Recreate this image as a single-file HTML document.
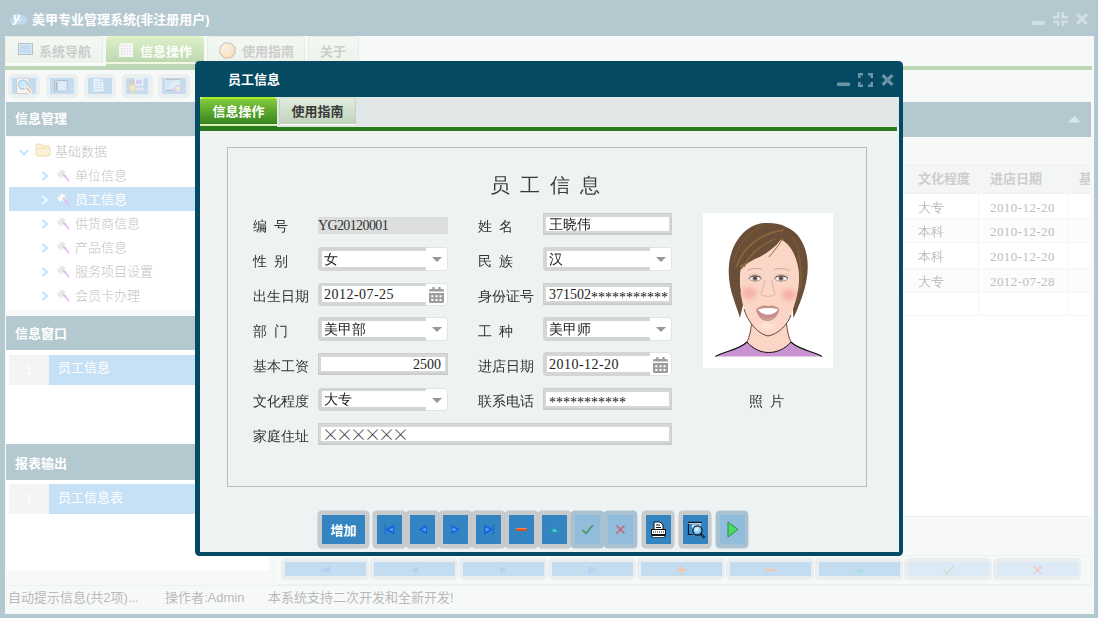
<!DOCTYPE html>
<html lang="zh-CN">
<head>
<meta charset="utf-8">
<title>美甲专业管理系统</title>
<style>
*{box-sizing:border-box;margin:0;padding:0}
html,body{width:1099px;height:618px;overflow:hidden;background:#f3f7f9}
body{position:relative;font-family:"Liberation Sans","Noto Sans CJK SC",sans-serif;font-size:13px;color:#333}
.a{position:absolute}
.ya{font-family:"Liberation Sans","Noto Sans CJK SC",sans-serif}
.ss{font-family:"Liberation Serif","WenQuanYi Zen Hei","Noto Sans CJK SC",sans-serif}
#win{left:0;top:0;width:1098px;height:618px;background:#b4c8d0}
#cont{left:5px;top:36px;width:1089px;height:578px;background:#f7f9f9}
.wt{color:#fff;font-weight:bold;font-size:13px;white-space:nowrap}
/* outer tabs */
.otab{top:36px;height:28px;border:1px solid #e6ede6;border-bottom:1px solid #fff;border-radius:4px 4px 0 0;background:linear-gradient(#f4f8f4,#ebf3ea);color:#cdcdcd;font-weight:bold;font-size:13px;line-height:29px;white-space:nowrap}
.otab.on{background:linear-gradient(#e9f8c0 0,#dcefc8 1.5px,#bcd9b0 26px,#f2f8e0 26.5px,#f2f8e0 27.5px,#bcd8b4 28px);border:none;border-top:0;color:#fff;height:30px;line-height:31px}
/* toolbar */
.tb{top:74px;width:32px;height:24px;border-radius:5px;background:#eceff0}
.tb i{position:absolute;left:4px;top:4px;width:24px;height:16px;background:#c4dcf0}
/* left */
.hd{height:34px;background:#b4c8d0;color:#fff;font-weight:bold;font-size:13px;line-height:34px;padding-left:9px;white-space:nowrap}
.tr{left:9px;width:264px;height:24px;line-height:24px;font-size:13px;font-weight:300;color:#c2c2c2;white-space:nowrap}
.tr span{position:absolute;top:0}
.chev{stroke:#a2e2f6;stroke-width:1.5;fill:none}
/* dialog */
#dlg{left:195px;top:61px;width:708px;height:495px;background:#044a63;border-radius:4.5px}
#dbody{left:5px;top:36px;width:699px;height:455px;background:#eef2f3}
.as{position:relative;top:3px}
.lb{font-size:14px;line-height:16px;color:#333;white-space:pre;word-spacing:3.5px}
.fld{height:21px;background:#fff;border:3px solid #d6d7d7;border-top-width:4px;box-shadow:0 1px 0 #c9caca;outline:1px solid #cdcece;outline-offset:-1px;font-size:14px;line-height:16px;color:#222;white-space:nowrap;overflow-x:clip;overflow-y:visible;padding-left:3px}
.cmb{height:24px;width:130px;border-radius:4px;background:#fff;box-shadow:inset 0 0 0 1px #e0e4e4;overflow:hidden;font-size:14px;color:#222;white-space:nowrap}
.cmb .in{position:absolute;left:0;top:0;width:108px;height:100%;border:4px solid #d4d6d6;border-right:none;background:#fff;padding-left:2px;line-height:18px;border-radius:3px 0 0 3px}
.cmb.d{height:23px}
.cmb.d .in{border-top-width:3px;line-height:18px}
.arr{position:absolute;right:6.5px;top:10px;width:0;height:0;border:5px solid transparent;border-top:5.5px solid #979797;border-bottom:none}
.bt{top:450px;width:32px;height:36.5px;border-radius:4px;background:#c7cbcb;box-shadow:0 0 0 .5px #b4c6d2}
.bt i{position:absolute;left:4px;top:4px;width:25px;height:29px;background:#3384c0}
.bt.dis{background:#a9c2d2}
.bt.dis i{background:#92bcdc}
.bt svg{position:absolute;left:4px;top:4px}
/* grid */
.gh{top:164px;height:30px;line-height:30px;font-weight:bold;font-size:13px;color:#cdcdcd;white-space:nowrap}
.gc{font-family:"Liberation Serif","WenQuanYi Zen Hei","Noto Sans CJK SC",sans-serif;font-size:13px;color:#bdbdbd;white-space:nowrap;line-height:24px;height:24px}
.nb{top:558px;width:88px;height:22px;border-radius:5px;background:#ebeef0}
.nb i{position:absolute;left:4px;top:4px;width:81px;height:14px;background:#c4dcf0}
.nb.dis i{background:#dceaf5}
.nb svg{position:absolute;left:4px;top:5px}
.st{top:588px;height:20px;line-height:20px;font-size:13px;color:#b9b9b9;white-space:nowrap}
</style>
</head>
<body>
<div id="win" class="a">
<!-- title -->
<svg class="a" style="left:9px;top:11px" width="18" height="15" viewBox="0 0 18 15"><path d="M4.500 13.500a3.700 3.700 0 0 1-.5-7.300A4.600 4.600 0 0 1 12.300 4.300a3.600 3.600 0 0 1 2.200 9.200z" fill="#bfd9ec"/><text x="3.800" y="11.300" font-size="13" font-weight="bold" font-style="italic" fill="#fff" font-family="Liberation Sans,sans-serif">y</text><path d="M10.500 8.500h3M10.500 8.500v2.500" stroke="#e4f0f8" stroke-width="1" fill="none"/></svg>
<div class="a wt" style="left:32px;top:10px;line-height:20px">美甲专业管理系统(非注册用户)</div>
<svg class="a" style="left:1030px;top:10px" width="60" height="18" viewBox="0 0 60 18" fill="#d3dde5"><rect x="2" y="11" width="13" height="4" rx="1"/><path d="M23 6h4V2h2.500v6.500H23zM31.500 2H34v4h4v2.500h-6.500zM23 10.500h6.500V16H27v-3h-4zM31.500 10.500H38V13h-4v3h-2.500z"/><path d="M46 5.200L48.200 3 52 6.800 55.800 3 58 5.200 54.200 9 58 12.800 55.800 15 52 11.200 48.200 15 46 12.800 49.800 9z"/></svg>
<div id="cont" class="a"></div>

<!-- outer tabs -->
<div class="a otab" style="left:5px;width:98px"><svg class="a" style="left:12px;top:6px" width="15" height="12" viewBox="0 0 15 12"><rect x=".5" y=".5" width="14" height="11" fill="#d6e7f5" stroke="#bdbdc8"/><rect x="2" y="2" width="11" height="8" fill="#c6dcf0"/></svg><span class="a" style="left:33px">系统导航</span></div>
<div class="a otab on" style="left:106px;width:98px"><svg class="a" style="left:13px;top:7px" width="14" height="14" viewBox="0 0 14 14"><path d="M2.500 0H14V14H0V2.500z" fill="#fbf9fb"/><path d="M2.800 1v13M5.600 0v14M8.400 0v14M11.200 0v14M1 2.800h13M0 5.600h14M0 8.400h14M0 11.200h14" stroke="#e2dde2" stroke-width=".5"/></svg><span class="a" style="left:34px">信息操作</span></div>
<div class="a otab" style="left:207px;width:98px"><svg class="a" style="left:11px;top:5px" width="17" height="17" viewBox="0 0 18 18"><defs><linearGradient id="og" x1="0" y1="0" x2="1" y2="1"><stop offset="0" stop-color="#fef6de"/><stop offset="1" stop-color="#fbd9b0"/></linearGradient></defs><path d="M5.800 1h6.400L17 5.800v6.400L12.200 17H5.800L1 12.200V5.800z" fill="url(#og)" stroke="#cbbcc4" stroke-width="1.100"/><text x="5.800" y="13.600" font-size="12" font-weight="bold" fill="#e9f0f4" font-family="Liberation Sans,sans-serif">?</text></svg><span class="a" style="left:34px">使用指南</span></div>
<div class="a otab" style="left:308px;width:51px"><span class="a" style="left:11px">关于</span></div>
<div class="a" style="left:5px;top:66px;width:1087px;height:4px;background:#bdd6b8"></div>
<!-- toolbar -->
<div class="a tb" style="left:8px"><i></i><svg class="a" style="left:7px;top:3px" width="18" height="18" viewBox="0 0 18 18"><rect x="1.500" y="1" width="12.500" height="15.500" rx="1" fill="#f3f4f5" stroke="#cfcfcf"/><circle cx="8" cy="7.500" r="4.500" fill="#cfeaf8" stroke="#a9cfe6" stroke-width="1.300"/><path d="M11.500 11l3.500 3.800" stroke="#fff" stroke-width="4" stroke-linecap="round"/><path d="M11.500 11l3.500 3.800" stroke="#f4c3a6" stroke-width="2.400" stroke-linecap="round"/></svg></div>
<div class="a tb" style="left:46px"><i></i><svg class="a" style="left:8px;top:5px" width="16" height="14" viewBox="0 0 16 14"><rect x=".5" y="1.500" width="12.500" height="10.500" fill="#d6e7f5" stroke="#b4bcc4"/><path d="M2.500 3v8" stroke="#aab4bc" stroke-width="1.500"/><path d="M5 4h8M5 6.500h8M5 9h8M5 11h8" stroke="#e9f2f9" stroke-width="1.200"/></svg></div>
<div class="a tb" style="left:84px"><i></i><svg class="a" style="left:8px;top:3px" width="13" height="16" viewBox="0 0 14 17"><path d="M1 1h8l4 4v11H1z" fill="#eaf4fd" stroke="#c3d5e4"/><path d="M9 1v4h4" fill="#f6f9fc" stroke="#c3c9d0"/><path d="M3 5h4M3 7.500h8M3 10h8M3 12.500h8" stroke="#c4dcf2" stroke-width="1.100"/></svg></div>
<div class="a tb" style="left:122px;width:31px"><i style="width:22px"></i><svg class="a" style="left:6px;top:3px" width="20" height="18" viewBox="0 0 20 18"><rect x="7.400" y="2" width="7.200" height="6" fill="#d6d0f8" stroke="#f4f6f8" stroke-width="1.200"/><circle cx="4.400" cy="5.300" r="2.300" fill="#d4d4d4" stroke="#bdbdbd" stroke-width=".5"/><path d="M1.800 7.800h5.400v5h-1.200v4h-1.200v-3.500h-.6v3.500H3v-4H1.800z" fill="#f7e8c4" stroke="#e6d2a4" stroke-width=".5"/><rect x="8" y="10.500" width="7.500" height="3" fill="#f4f6f8" stroke="#d8dce0" stroke-width=".6"/><path d="M9.500 12h4.500M8 15.800h6" stroke="#d4d8dc" stroke-width="1"/></svg></div>
<div class="a tb" style="left:158px"><i></i><svg class="a" style="left:6px;top:3px" width="20" height="18" viewBox="0 0 20 18"><defs><linearGradient id="mg" x1="0" y1="0" x2="1" y2="1"><stop offset="0" stop-color="#c9e0f3"/><stop offset="1" stop-color="#eef6fc"/></linearGradient></defs><rect x="1.800" y="2.300" width="14" height="11" fill="url(#mg)" stroke="#e4ecf2" stroke-width=".8"/><path d="M1.800 2.300h14M1.800 13.300h14" stroke="#b4b4b8" stroke-width="1.100"/><circle cx="13.900" cy="12" r="3.500" fill="#cfe4f6" stroke="#eeb8e6" stroke-width=".8"/><path d="M12 10.500q2-1.500 3.500 0 0 2-1.500 3-1.500-.5-2-3z" fill="#f6ecb8"/></svg></div>
<!-- left panel -->
<div class="a" style="left:6px;top:137px;width:265px;height:173px;background:#fff"></div>
<div class="a hd" style="left:6px;top:102px;width:267px">信息管理</div>
<div class="a" style="left:9px;top:187px;width:264px;height:24px;background:#c6e1f6"></div>
<div class="a tr" style="top:140px"><svg class="a" style="left:10px;top:7px" width="10" height="10" viewBox="0 0 10 10"><path class="chev" d="M1 3l4 4.500L9 3"/></svg><svg class="a" style="left:26px;top:3px" width="16" height="14" viewBox="0 0 16 14"><path d="M1 3.500Q1 1 3 1h3l1.500 2H13q2 0 2 2v6q0 2-2 2H3q-2 0-2-2z" fill="#fcf1d4" stroke="#eddcae"/><path d="M1.500 5.500h13" stroke="#f4e1b4"/></svg><span style="left:46px">基础数据</span></div>
<div class="a tr" style="top:164px"><svg class="a" style="left:32px;top:7px" width="8" height="10" viewBox="0 0 8 10"><path class="chev" d="M1.500 1l4.500 4-4.500 4"/></svg><svg class="a tic" style="left:46px;top:4px" width="16" height="15" viewBox="0 0 16 15"><path d="M2 6l5-4.500 4 2-2 1.500 2.500 2.500L9 10 7 8 4.500 10z" fill="#e9e9e9"/><path d="M8 6l6 7" stroke="#e3b9f0" stroke-width="1.500"/></svg><span style="left:66px">单位信息</span></div>
<div class="a tr" style="top:188px;color:#fff;font-weight:400"><svg class="a" style="left:32px;top:7px" width="8" height="10" viewBox="0 0 8 10"><path class="chev" style="stroke:#fff" d="M1.500 1l4.500 4-4.500 4"/></svg><svg class="a" style="left:46px;top:4px" width="16" height="15" viewBox="0 0 16 15"><path d="M2 6l5-4.500 4 2-2 1.500 2.500 2.500L9 10 7 8 4.500 10z" fill="#f7f7f7"/><path d="M8 6l6 7" stroke="#e3b9f0" stroke-width="1.500"/></svg><span style="left:66px">员工信息</span></div>
<div class="a tr" style="top:212px"><svg class="a" style="left:32px;top:7px" width="8" height="10" viewBox="0 0 8 10"><path class="chev" d="M1.500 1l4.500 4-4.500 4"/></svg><svg class="a" style="left:46px;top:4px" width="16" height="15" viewBox="0 0 16 15"><path d="M2 6l5-4.500 4 2-2 1.500 2.500 2.500L9 10 7 8 4.500 10z" fill="#e9e9e9"/><path d="M8 6l6 7" stroke="#e3b9f0" stroke-width="1.500"/></svg><span style="left:66px">供货商信息</span></div>
<div class="a tr" style="top:236px"><svg class="a" style="left:32px;top:7px" width="8" height="10" viewBox="0 0 8 10"><path class="chev" d="M1.500 1l4.500 4-4.500 4"/></svg><svg class="a" style="left:46px;top:4px" width="16" height="15" viewBox="0 0 16 15"><path d="M2 6l5-4.500 4 2-2 1.500 2.500 2.500L9 10 7 8 4.500 10z" fill="#e9e9e9"/><path d="M8 6l6 7" stroke="#e3b9f0" stroke-width="1.500"/></svg><span style="left:66px">产品信息</span></div>
<div class="a tr" style="top:260px"><svg class="a" style="left:32px;top:7px" width="8" height="10" viewBox="0 0 8 10"><path class="chev" d="M1.500 1l4.500 4-4.500 4"/></svg><svg class="a" style="left:46px;top:4px" width="16" height="15" viewBox="0 0 16 15"><path d="M2 6l5-4.500 4 2-2 1.500 2.500 2.500L9 10 7 8 4.500 10z" fill="#e9e9e9"/><path d="M8 6l6 7" stroke="#e3b9f0" stroke-width="1.500"/></svg><span style="left:66px">服务项目设置</span></div>
<div class="a tr" style="top:284px"><svg class="a" style="left:32px;top:7px" width="8" height="10" viewBox="0 0 8 10"><path class="chev" d="M1.500 1l4.500 4-4.500 4"/></svg><svg class="a" style="left:46px;top:4px" width="16" height="15" viewBox="0 0 16 15"><path d="M2 6l5-4.500 4 2-2 1.500 2.500 2.500L9 10 7 8 4.500 10z" fill="#e9e9e9"/><path d="M8 6l6 7" stroke="#e3b9f0" stroke-width="1.500"/></svg><span style="left:66px">会员卡办理</span></div>
<div class="a hd" style="left:6px;top:316px;width:267px;line-height:36px">信息窗口</div>
<div class="a" style="left:6px;top:350px;width:265px;height:94px;background:#fff"></div>
<div class="a" style="left:9px;top:355px;width:40px;height:30px;background:#f3f4f4;color:#fff;font-size:13px;line-height:30px;text-align:center">1</div>
<div class="a" style="left:49px;top:355px;width:224px;height:30px;background:#c6e1f6;color:#fff;font-size:13px;line-height:26px;padding-left:9px">员工信息</div>
<div class="a hd" style="left:6px;top:444px;width:267px;height:36px;line-height:40px">报表输出</div>
<div class="a" style="left:6px;top:480px;width:263px;height:90px;background:#fff"></div>
<div class="a" style="left:9px;top:484px;width:40px;height:30px;background:#f3f4f4;color:#fff;font-size:13px;line-height:30px;text-align:center">1</div>
<div class="a" style="left:49px;top:484px;width:224px;height:30px;background:#c6e1f6;color:#fff;font-size:13px;line-height:28px;padding-left:9px">员工信息表</div>
<!-- right panel -->
<div class="a" style="left:277px;top:102px;width:814px;height:35px;background:#b4c8d0"></div>
<svg class="a" style="left:1068px;top:116px" width="13" height="7" viewBox="0 0 13 7"><path d="M0 6.500L6.500 0 13 6.500z" fill="#dbe5ea"/></svg>
<div class="a" style="left:277px;top:193px;width:813px;height:323px;background:#fff"></div>
<div class="a" style="left:277px;top:164px;width:813px;height:30px;background:#f4f5f5;border-top:1px solid #f0f1f1;border-bottom:1px solid #eff0f0"></div>
<div class="a" style="left:277px;top:218px;width:813px;height:25px;background:#fcfcfc;border-top:1px solid #f6f6f6;border-bottom:1px solid #f6f6f6"></div>
<div class="a" style="left:277px;top:268px;width:813px;height:25px;background:#fcfcfc;border-top:1px solid #f6f6f6;border-bottom:1px solid #f6f6f6"></div>
<div class="a" style="left:277px;top:315px;width:813px;height:1px;background:#f5f5f5"></div>
<div class="a" style="left:978px;top:165px;width:1px;height:151px;background:#f4f5f5"></div>
<div class="a" style="left:1068px;top:165px;width:1px;height:151px;background:#f4f5f5"></div>
<div class="a gh" style="left:918px">文化程度</div>
<div class="a gh" style="left:990px">进店日期</div>
<div class="a gh" style="left:1079px;width:11px;overflow:hidden">基本</div>
<div class="a gc" style="left:918px;top:196px">大专</div><div class="a gc ss" style="left:990px;top:196px;letter-spacing:.43px">2010-12-20</div>
<div class="a gc" style="left:918px;top:220px">本科</div><div class="a gc ss" style="left:990px;top:220px;letter-spacing:.43px">2010-12-20</div>
<div class="a gc" style="left:918px;top:245px">本科</div><div class="a gc ss" style="left:990px;top:245px;letter-spacing:.43px">2010-12-20</div>
<div class="a gc" style="left:918px;top:270px">大专</div><div class="a gc ss" style="left:990px;top:270px;letter-spacing:.43px">2012-07-28</div>
<div class="a" style="left:277px;top:516px;width:814px;height:1px;background:#eef0f0"></div>
<!-- bottom nav -->
<div class="a" style="left:277px;top:555px;width:814px;height:30px;border:1px solid #eef1f1;border-left:none"></div>
<div class="a nb" style="left:281px"><i></i><svg width="81" height="14" viewBox="0 0 81 14"><path d="M36.500 3v8M37.500 7l7-3.500v7z" fill="#b2d2f3" stroke="#b2d2f3"/></svg></div>
<div class="a nb" style="left:370px"><i></i><svg width="81" height="14" viewBox="0 0 81 14"><path d="M37 7l7-3.500v7z" fill="#b2d2f3"/></svg></div>
<div class="a nb" style="left:459px"><i></i><svg width="81" height="14" viewBox="0 0 81 14"><path d="M44 7l-7-3.500v7z" fill="#b2d2f3"/></svg></div>
<div class="a nb" style="left:548px"><i></i><svg width="81" height="14" viewBox="0 0 81 14"><path d="M44.500 3v8M43.500 7l-7-3.500v7z" fill="#b2d2f3" stroke="#b2d2f3"/></svg></div>
<div class="a nb" style="left:637px"><i></i><svg width="81" height="14" viewBox="0 0 81 14"><path d="M40.500 2.500v9M36 7h9" stroke="#f6c3a6" stroke-width="1.800"/></svg></div>
<div class="a nb" style="left:726px"><i></i><svg width="81" height="14" viewBox="0 0 81 14"><path d="M35.500 7h10" stroke="#f6c3a6" stroke-width="2"/></svg></div>
<div class="a nb" style="left:815px"><i></i><svg width="81" height="14" viewBox="0 0 81 14"><path d="M36 9.500l4.500-4.500 4.500 4.500z" fill="#a8e0e6"/></svg></div>
<div class="a nb dis" style="left:904px"><i></i><svg width="81" height="14" viewBox="0 0 81 14"><path d="M35.500 7.500l3.500 3.500 6.500-8" stroke="#c6e3cf" stroke-width="1.800" fill="none"/></svg></div>
<div class="a nb dis" style="left:993px"><i></i><svg width="81" height="14" viewBox="0 0 81 14"><path d="M36.500 3l8 8M44.500 3l-8 8" stroke="#f3c9c9" stroke-width="1.600"/></svg></div>
<!-- status -->
<div class="a" style="left:5px;top:585px;width:1086px;height:1px;background:#eef1f1"></div>
<div class="a" style="left:273px;top:556px;width:1px;height:29px;background:#eef1f1"></div>
<div class="a st" style="left:8px">自动提示信息(共2项)...</div>
<div class="a st" style="left:165px">操作者:Admin</div>
<div class="a st" style="left:268px">本系统支持二次开发和全新开发!</div>
<!-- dialog -->
<div id="dlg" class="a">
<div class="a wt" style="left:33px;top:9px;line-height:20px">员工信息</div>
<svg class="a" style="left:641px;top:11px" width="60" height="17" viewBox="0 0 60 17" fill="#6b94a6"><rect x="1" y="10.500" width="13" height="3.500" rx=".8"/><path d="M22 1h5v2.500h-2.500V6H22zM32 1h5v5h-2.500V3.500H32zM22 10h2.500v2.500H27V15h-5zM34.500 10H37v5h-5v-2.500h2.500z"/><path d="M45.500 4.300L47.800 2 51.500 5.700 55.200 2 57.500 4.300 53.800 8 57.500 11.700 55.200 14 51.500 10.300 47.800 14 45.500 11.700 49.200 8z"/></svg>
<div id="dbody" class="a">
<div class="a" style="left:0;top:0;width:699px;height:30px;background:#e1e6e6"></div>
<div class="a" style="left:0;top:30px;width:697px;height:4px;background:#2a7a1e"></div>
<div class="a" style="left:0;top:0;width:77px;height:30px;border-radius:4px 4px 0 0;background:linear-gradient(#a8ee22 0,#a8ee22 1.5px,#80c83c 2.5px,#5da82b 14px,#3a8822 26px,#2a7a1e 27px);color:#fff;font-weight:bold;font-size:13px;line-height:30px;text-align:center;white-space:nowrap">信息操作<div class="a" style="left:0;top:27px;width:77px;height:2px;background:linear-gradient(#e9f4c0,#cfe6a0)"></div></div>
<div class="a" style="left:79px;top:0;width:77px;height:28px;border-radius:4px 4px 0 0;border:1px solid #c3d2c0;border-top-color:#d5dfd3;border-bottom:1px solid #fff;background:linear-gradient(#e1ecde,#bfd3bb);color:#3a3a3a;font-weight:bold;font-size:13px;line-height:28px;text-align:center;white-space:nowrap">使用指南</div>
<div class="a" style="left:27px;top:50px;width:640px;height:340px;border:1px solid #b9bcbc"></div>
</div>
<div id="f" class="a ss" style="left:-195px;top:-61px;width:0;height:0">
<div class="a" style="left:490px;top:173px;font-size:20px;line-height:24px;white-space:pre;word-spacing:5px;color:#3a3a3a">员 工 信 息</div>
<div class="a lb" style="left:253px;top:219px">编 号</div>
<div class="a lb" style="left:253px;top:254px">性 别</div>
<div class="a lb" style="left:253px;top:289px">出生日期</div>
<div class="a lb" style="left:253px;top:324px">部 门</div>
<div class="a lb" style="left:253px;top:359px">基本工资</div>
<div class="a lb" style="left:253px;top:394px">文化程度</div>
<div class="a lb" style="left:253px;top:429px">家庭住址</div>
<div class="a lb" style="left:478px;top:219px">姓 名</div>
<div class="a lb" style="left:478px;top:254px">民 族</div>
<div class="a lb" style="left:478px;top:289px">身份证号</div>
<div class="a lb" style="left:478px;top:324px">工 种</div>
<div class="a lb" style="left:478px;top:359px">进店日期</div>
<div class="a lb" style="left:478px;top:394px">联系电话</div>
<div class="a" style="left:318px;top:217px;width:130px;height:16.500px;background:#dcdddd;font-size:14px;line-height:18px;letter-spacing:-.62px;color:#333;white-space:nowrap">YG20120001</div>
<div class="a cmb" style="left:318px;top:247px;width:130px"><div class="in" style="width:108px">女</div><b class="arr"></b></div>
<div class="a cmb d" style="left:318px;top:283px;width:130px"><div class="in ss" style="width:108px;letter-spacing:.47px">2012-07-25</div><svg class="a" style="right:4px;top:4px" width="15" height="16" viewBox="0 0 15 16" fill="#9c9c9c"><rect x="3.300" y="0" width="2.200" height="3" rx=".5"/><rect x="9.400" y="0" width="2.200" height="3" rx=".5"/><path d="M0 3.500Q0 2 1.500 2h12Q15 2 15 3.500V4.600H0z"/><path d="M0 6h15v8.500Q15 16 13.500 16h-12Q0 16 0 14.500zM2.300 8.200v2.100h2.100V8.200zM6.500 8.200v2.100h2.100V8.200zM10.500 8.200v2.100h2.100V8.200zM2.300 12v2.100h2.100V12zM6.500 12v2.100h2.100V12zM10.500 12v2.100h2.100V12z" fill-rule="evenodd"/></svg></div>
<div class="a cmb" style="left:318px;top:317px;width:130px"><div class="in" style="width:108px">美甲部</div><b class="arr"></b></div>
<div class="a fld " style="left:318px;top:353px;width:130px;height:21px;text-align:right;padding-right:4px">2500</div>
<div class="a cmb d" style="left:318px;top:388px;width:130px"><div class="in" style="width:108px">大专</div><b class="arr"></b></div>
<div class="a fld " style="left:318px;top:423px;width:354px;height:21px;padding-left:4px"><span style="font-family:'Noto Sans CJK SC','WenQuanYi Zen Hei',sans-serif;color:#444;font-size:17px;letter-spacing:-3px;position:relative;top:-1.5px;left:-3px;font-weight:300">××××××</span></div>
<div class="a fld " style="left:543px;top:213px;width:129px;height:21px;">王晓伟</div>
<div class="a cmb" style="left:543px;top:247px;width:129px"><div class="in" style="width:107px">汉</div><b class="arr"></b></div>
<div class="a fld " style="left:543px;top:283px;width:129px;height:21px;">371502<span class="as">***********</span></div>
<div class="a cmb" style="left:543px;top:317px;width:129px"><div class="in" style="width:107px">美甲师</div><b class="arr"></b></div>
<div class="a cmb" style="left:543px;top:352px;width:129px"><div class="in ss" style="width:107px;letter-spacing:.47px">2010-12-20</div><svg class="a" style="right:4px;top:5px" width="15" height="16" viewBox="0 0 15 16" fill="#9c9c9c"><rect x="3.300" y="0" width="2.200" height="3" rx=".5"/><rect x="9.400" y="0" width="2.200" height="3" rx=".5"/><path d="M0 3.500Q0 2 1.500 2h12Q15 2 15 3.500V4.600H0z"/><path d="M0 6h15v8.500Q15 16 13.500 16h-12Q0 16 0 14.500zM2.300 8.200v2.100h2.100V8.200zM6.500 8.200v2.100h2.100V8.200zM10.500 8.200v2.100h2.100V8.200zM2.300 12v2.100h2.100V12zM6.500 12v2.100h2.100V12zM10.500 12v2.100h2.100V12z" fill-rule="evenodd"/></svg></div>
<div class="a fld " style="left:543px;top:388px;width:129px;height:21px;"><span class="as">***********</span></div>
<svg class="a" style="left:703px;top:213px" width="130" height="155" viewBox="0 0 130 155"><defs><filter id="bl" x="-30%" y="-30%" width="160%" height="160%"><feGaussianBlur stdDeviation="2.200"/></filter></defs><rect width="130" height="155" fill="#fff"/>
<path d="M65 10C48 9 35 22 29 38 24 52 25 70 30 84 32 91 35 98 37 105 38 100 39 96 40 92L90 92C90 97 90 101 90.500 105 93 100 96 92 99 84 104 70 106 56 104 44 102 30 94 18 83 14 78 11 72 10 65 10Z" fill="#6b4e37"/>
<path d="M12.500 143.500C22 138 36 137 44 129L47.500 117H84.500L88 129C96 137 110 138 119 143.500Z" fill="#c993d2"/>
<path d="M12.500 143.500C22 138 36 137 44 129M88 129C96 137 110 138 119 143.500" fill="none" stroke="#111" stroke-width="1.100"/>
<path d="M44 129C50 136 58 139.500 65.500 139.500 74 139.500 82 136 88 129L84 112H48Z" fill="#fbd5c6"/>
<path d="M44 129C50 136 58 139.500 65.500 139.500 74 139.500 82 136 88 129" fill="none" stroke="#111" stroke-width="1"/>
<path d="M48.500 110C48 118 46.500 124 44 129M83.500 110C84 118 85.500 124 88 129" fill="none" stroke="#3a2418" stroke-width=".7"/>
<path d="M37 56C36 68 37 82 41 96 44 107 54 121 65 123 76 121 85 111 88 102 93 88 97 74 96 60 94 40 84 25 70 24 54 24 39 38 37 56Z" fill="#fbd5c6"/>
<path d="M41 96C44 107 54 121 65 123 76 121 85 111 88 102" fill="none" stroke="#3a2418" stroke-width=".8"/>
<g filter="url(#bl)"><ellipse cx="46" cy="80" rx="7.500" ry="6" fill="#f5a9a6" opacity=".8"/><ellipse cx="86" cy="82" rx="7.500" ry="6" fill="#f5a9a6" opacity=".8"/><ellipse cx="65" cy="113" rx="8" ry="3.500" fill="#fde6da"/></g>
<path d="M82 19C78 30 66 40 52 46 46 49 41 52 37.500 57 36.500 62 36.500 70 37.500 78L35 88C29 74 28 56 31 44 35 28 50 12 66 11 74 11 79 14 82 19Z" fill="#6b4e37"/>
<path d="M82 19C90 30 95 42 96.500 58 97.500 68 96.500 78 94 88L92 100C97 90 101 78 103 64 105 48 102 32 94 22 90 18 85 16 82 19Z" fill="#6b4e37"/>
<path d="M36 53L43 49.500 39 56Z" fill="#8b6a3a"/>
<path d="M80 25C76 32 71 38 66 44" stroke="#8b6a3a" stroke-width="1" fill="none"/>
<path d="M81 17C62 19 40 32 33.500 54" stroke="#8b6a3a" stroke-width="1.600" fill="none"/>
<path d="M72 26C58 32 46 42 41 54" stroke="#8b6a3a" stroke-width="1.300" fill="none"/>
<path d="M62 12C46 18 34 32 30 50M90 24C97 38 100 56 98 76M95 40C98 52 98 66 96 80" stroke="#7d5f3a" stroke-width=".9" fill="none"/>
<path d="M44.500 57.500C49 55 55 54.800 59 56.500M71.500 56.500C76 54.800 83 55.500 87 58" stroke="#c9a3a8" stroke-width="1" fill="none"/>
<path d="M46 63C49 60.500 55 60.500 58 63.500" stroke="#dcc6a8" stroke-width="1.600" fill="none"/><path d="M72 63.500C75 60.500 82 60.500 85 63" stroke="#dcc6a8" stroke-width="1.600" fill="none"/>
<path d="M46 65.500C48.500 62 55.500 62 58.500 65.500 55.500 69 48.500 69 46 65.500Z" fill="#fff" stroke="#6a5658" stroke-width=".6"/><circle cx="52" cy="65.300" r="2.500" fill="#8d7072"/><circle cx="52" cy="65.300" r="1.100" fill="#3a2a2c"/><path d="M46 65.500C48.500 62 55.500 62 58.500 65.500" fill="none" stroke="#4a3a3a" stroke-width=".9"/>
<path d="M71.500 65.500C74 62 82 62 85 65.500 82 69 74 69 71.500 65.500Z" fill="#fff" stroke="#6a5658" stroke-width=".6"/><circle cx="78" cy="65.300" r="2.500" fill="#8d7072"/><circle cx="78" cy="65.300" r="1.100" fill="#3a2a2c"/><path d="M71.500 65.500C74 62 82 62 85 65.500" fill="none" stroke="#4a3a3a" stroke-width=".9"/>
<path d="M62 67C61.500 73 59 77 58 80.500 59 84 63 82.500 65 83.500 67 82.500 71 84 72 80.500 71 77 69.500 73 69 67" fill="none" stroke="#dba99b" stroke-width=".8"/>
<path d="M53 96.500C56 93 61 91.500 65 93 69 91.500 73.500 93 76.500 96 75 103 70.500 108 64.500 108 58.500 108 54.500 103 53 96.500Z" fill="#c4918d"/>
<path d="M55 96.500C61 94.500 69 94.500 75 96.300 73 100 69 101.500 65 101.500 61 101.500 57 100 55 96.500Z" fill="#fff"/>
<path d="M57 103C61 106.500 68 106.500 72.500 103 70 108 60 108 57 103Z" fill="#d8a9a2"/>
</svg>
<div class="a lb" style="left:749px;top:394px">照 片</div>
</div>
<div class="a bt" style="left:123px;width:50.5px"><i style="width:43px;color:#fff;font:bold 13px/31px 'Liberation Sans','Noto Sans CJK SC',sans-serif;text-align:center;font-style:normal">增加</i></div>
<div class="a bt" style="left:178px;width:32.5px"><i style="width:25px"></i><svg width="25" height="29" viewBox="0 0 25 29"><path d="M8 9.500v10M9 14.500l8-4.500v9z" fill="#1466e0" stroke="#1466e0"/><path d="M12 14.500l3.800-2v4z" fill="#5aa6ff"/></svg></div>
<div class="a bt" style="left:211px;width:32.5px"><i style="width:25px"></i><svg width="25" height="29" viewBox="0 0 25 29"><path d="M8.500 14.500l8.500-4.800v9.600z" fill="#1466e0"/><path d="M12 14.500l3.800-2v4z" fill="#5aa6ff"/></svg></div>
<div class="a bt" style="left:244px;width:32.5px"><i style="width:25px"></i><svg width="25" height="29" viewBox="0 0 25 29"><path d="M17 14.500l-8.500-4.800v9.600z" fill="#1466e0"/><path d="M13.500 14.500l-3.800-2v4z" fill="#5aa6ff"/></svg></div>
<div class="a bt" style="left:277px;width:32.5px"><i style="width:25px"></i><svg width="25" height="29" viewBox="0 0 25 29"><path d="M17.500 9.500v10M16.500 14.500l-8-4.500v9z" fill="#1466e0" stroke="#1466e0"/><path d="M13.500 14.500l-3.800-2v4z" fill="#5aa6ff"/></svg></div>
<div class="a bt" style="left:310px;width:32.5px"><i style="width:25px"></i><svg width="25" height="29" viewBox="0 0 25 29"><rect x="7.500" y="13" width="10" height="3" fill="#e8501a"/><rect x="7.500" y="13" width="10" height="1" fill="#f58a5a"/></svg></div>
<div class="a bt" style="left:343px;width:32.5px"><i style="width:25px"></i><svg width="25" height="29" viewBox="0 0 25 29"><path d="M7 17.500l5.500-5.500 5.500 5.500z" fill="#1aa0b4"/><path d="M9.800 16.500l2.700-2.700 2.700 2.700z" fill="#5fd0dc"/></svg></div>
<div class="a bt dis" style="left:376px;width:32.5px"><i style="width:25px"></i><svg width="25" height="29" viewBox="0 0 25 29"><path d="M7.500 15l3.500 3.500 7-8.500" stroke="#4b9b6e" stroke-width="1.800" fill="none"/></svg></div>
<div class="a bt dis" style="left:409px;width:32.5px"><i style="width:25px"></i><svg width="25" height="29" viewBox="0 0 25 29"><path d="M8.500 10.500l8 8M16.500 10.500l-8 8" stroke="#c9686e" stroke-width="1.600"/></svg></div>
<div class="a bt" style="left:446.9px;width:32.5px"><i style="width:25px"></i><svg width="25" height="29" viewBox="0 0 25 29"><path d="M8 7h6l3 3v5H8z" fill="#fff" stroke="#111"/><path d="M10 10h4M10 12.500h5" stroke="#111"/><rect x="5.500" y="14.500" width="14" height="5" fill="#fff" stroke="#111"/><path d="M7 17h11" stroke="#111" stroke-dasharray="1 1"/><rect x="5.500" y="20" width="14" height="2.500" fill="#111"/><rect x="6.500" y="21" width="12" height="1" fill="#fff"/></svg></div>
<div class="a bt" style="left:483.7px;width:32.5px"><i style="width:25px"></i><svg width="25" height="29" viewBox="0 0 25 29"><defs><radialGradient id="lg" cx=".4" cy=".35" r=".7"><stop offset="0" stop-color="#eef9ff"/><stop offset=".5" stop-color="#8fd0fb"/><stop offset="1" stop-color="#2b90e6"/></radialGradient></defs><path d="M5 7.500h14" stroke="#111" stroke-width="1.300"/><path d="M5.500 8.500h13" stroke="#e8e8e8" stroke-width=".8"/><rect x="6" y="9.500" width="3" height="9" fill="#2c8fe0"/><rect x="9" y="9.500" width="9" height="4" fill="#bfe0f8"/><path d="M5.500 9v10.500M4.500 19.500h5" stroke="#111" stroke-width="1.200"/><circle cx="14.500" cy="15.500" r="4.600" fill="url(#lg)" stroke="#111" stroke-width="1.100"/><path d="M18 19.200l2.800 2.800" stroke="#111" stroke-width="2.200" stroke-linecap="round"/><path d="M18.800 20l1.700 1.700" stroke="#4aa8f0" stroke-width=".9"/></svg></div>
<div class="a bt dis" style="left:520.8px;width:32.7px"><i style="width:25.5px"></i><svg width="25" height="29" viewBox="0 0 25 29"><path d="M8 7l10 7.500L8 22z" fill="#4cd964" stroke="#2e8f43" stroke-width="1"/></svg></div>
</div>
</div>
</body>
</html>
